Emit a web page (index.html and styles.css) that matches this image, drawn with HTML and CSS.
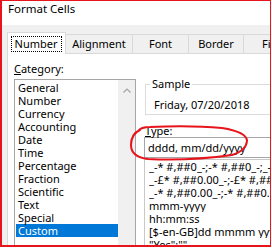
FILE: index.html
```html
<!DOCTYPE html>
<html lang="en">
<head>
    <meta charset="UTF-8">
    <title>Format Cells</title>
    <link rel="stylesheet" href="styles.css">
</head>
<body>
    <div class="frame">
        <div class="titlebar">Format Cells</div>

        <div class="tabstrip">
            <div class="tab active"><span class="focus">Number</span></div>
            <div class="tab tab-align">Alignment</div>
            <div class="tab tab-font">Font</div>
            <div class="tab tab-border">Border</div>
            <div class="tab tab-fill">Fill</div>
        </div>

        <div class="page">
            <div class="col-left">
                <div class="label"><u>C</u>ategory:</div>
                <div class="listbox">
                    <ul class="items">
                        <li>General</li>
                        <li>Number</li>
                        <li>Currency</li>
                        <li>Accounting</li>
                        <li>Date</li>
                        <li>Time</li>
                        <li>Percentage</li>
                        <li>Fraction</li>
                        <li>Scientific</li>
                        <li>Text</li>
                        <li>Special</li>
                        <li class="selected">Custom</li>
                    </ul>
                    <div class="scrollbar">
                        <svg class="arrow" width="8" height="5" viewBox="0 0 8 5">
                            <polyline points="0.5,4.5 4,1 7.5,4.5" fill="none" stroke="#a3a3a3" stroke-width="1.2"/>
                        </svg>
                    </div>
                </div>
            </div>

            <div class="col-right">
                <fieldset class="sample">
                    <legend>Sample</legend>
                    <div class="sample-value">Friday, 07/20/2018</div>
                </fieldset>
                <div class="label type-label"><u>T</u>ype:</div>
                <div class="type-input">dddd, mm/dd/yyyy</div>
                <ul class="type-list">
                    <li>_-* #,##0_-;-* #,##0_-;_-* "-"_-;_-@_-</li>
                    <li>_-£* #,##0.00_-;-£* #,##0.00_-;_-£* "-"??_-;_-@_-</li>
                    <li>_-* #,##0.00_-;-* #,##0.00_-;_-* "-"??_-;_-@_-</li>
                    <li>mmm-yyyy</li>
                    <li>hh:mm:ss</li>
                    <li>[$-en-GB]dd mmmm yyyy</li>
                    <li>"Yes";""</li>
                </ul>
            </div>
        </div>
    </div>

    <!-- hand-drawn highlight over the Type box -->
    <svg class="annotation" width="272" height="248" viewBox="0 0 272 248">
        <path d="M 138 131 Q 141 127 150 127 Q 190 125 222 128 Q 247 132 247 141 Q 246 151 232 155 Q 190 161 148 159 Q 131 157 131 145 Q 131 134 140 130"
              fill="none" stroke="#e8141b" stroke-width="2" stroke-linecap="round"/>
    </svg>
</body>
</html>
```

FILE: styles.css
```css
:root {
    --dialog-bg: #f0f0f0;
    --tab-border: #d9d9d9;
    --list-border: #a6a6a6;
    --select-bg: #0078d7;
    --frame-red: #e8141b;
}

body {
    margin: 0;
    position: relative;
    background: #ffffff;
    font-family: "Noto Sans", sans-serif;
    font-size: 11px;
    color: #000000;
}

.frame {
    width: 268px;
    height: 244px;
    border-top: 1px solid var(--frame-red);
    border-left: 2px solid var(--frame-red);
    border-right: 1px solid var(--frame-red);
    border-bottom: 2px solid var(--frame-red);
    background: var(--dialog-bg);
    overflow: hidden;
    display: flex;
    flex-direction: column;
}

.titlebar {
    height: 24px;
    flex: none;
    background: #ffffff;
    padding-left: 6px;
    font-size: 11.5px;
    line-height: 16px;
    white-space: nowrap;
}

/* tabs */
.tabstrip {
    height: 28px;
    flex: none;
    display: flex;
    align-items: flex-end;
    padding-left: 5px;
    white-space: nowrap;
}

.tab {
    height: 18px;
    flex: none;
    border-top: 1px solid var(--tab-border);
    border-right: 1px solid var(--tab-border);
    line-height: 18px;
    text-align: center;
}

.tab.active {
    width: 57px;
    height: 21px;
    margin-bottom: -1px;
    border-left: 1px solid var(--tab-border);
    background: #ffffff;
    position: relative;
    z-index: 1;
    display: flex;
    justify-content: center;
    align-items: center;
}

.focus {
    display: inline-block;
    height: 14px;
    line-height: 14px;
    padding: 0 4px 0 3px;
    border: 1px dotted #000000;
}

.tab-align { width: 66px; }
.tab-font { width: 55px; }
.tab-border { width: 54px; }
.tab-fill { width: 50px; text-align: left; padding-left: 18px; }

/* page */
.page {
    flex: 1;
    margin-left: 5px;
    border-left: 1px solid var(--tab-border);
    border-top: 1px solid var(--tab-border);
    background: #ffffff;
    display: flex;
    gap: 8px;
    padding: 8px 0 0 6px;
}

.label {
    height: 13px;
    line-height: 13px;
    white-space: nowrap;
}

.col-left {
    flex: none;
    width: 122px;
}

.listbox {
    margin-top: 4px;
    height: 180px;
    border: 1px solid var(--list-border);
    display: flex;
}

.items {
    list-style: none;
    margin: 0;
    padding: 1px 0 0 1px;
    width: 102px;
}

.items li {
    height: 13px;
    line-height: 13px;
    padding-left: 2px;
    white-space: nowrap;
}

.items li.selected {
    background: var(--select-bg);
    color: #ffffff;
}

.scrollbar {
    width: 17px;
    background: var(--dialog-bg);
    display: flex;
    justify-content: center;
    align-items: flex-start;
    padding-top: 8px;
}

.col-right {
    flex: none;
    width: 160px;
}

.sample {
    margin: 15px 0 0 1px;
    padding: 0 0 3px 4px;
    border: 1px solid #dcdcdc;
    min-width: 0;
}

.sample legend {
    padding: 0 2px;
    line-height: 14px;
}

.sample-value {
    margin: 7px 0 0 4px;
    line-height: 13px;
    white-space: nowrap;
}

.type-label {
    margin: 9px 0 0 1px;
}

.type-input {
    height: 19px;
    line-height: 19px;
    border: 1px solid #a6a6a6;
    padding-left: 3px;
    white-space: nowrap;
}

.type-list {
    list-style: none;
    margin: 1px 0 0 0;
    padding: 0 0 0 4px;
    height: 120px;
    border: 1px solid #c8c8c8;
}

.type-list li {
    height: 13px;
    line-height: 13px;
    white-space: nowrap;
    overflow: hidden;
}

.annotation {
    position: absolute;
    left: 0;
    top: 0;
    pointer-events: none;
}
```
